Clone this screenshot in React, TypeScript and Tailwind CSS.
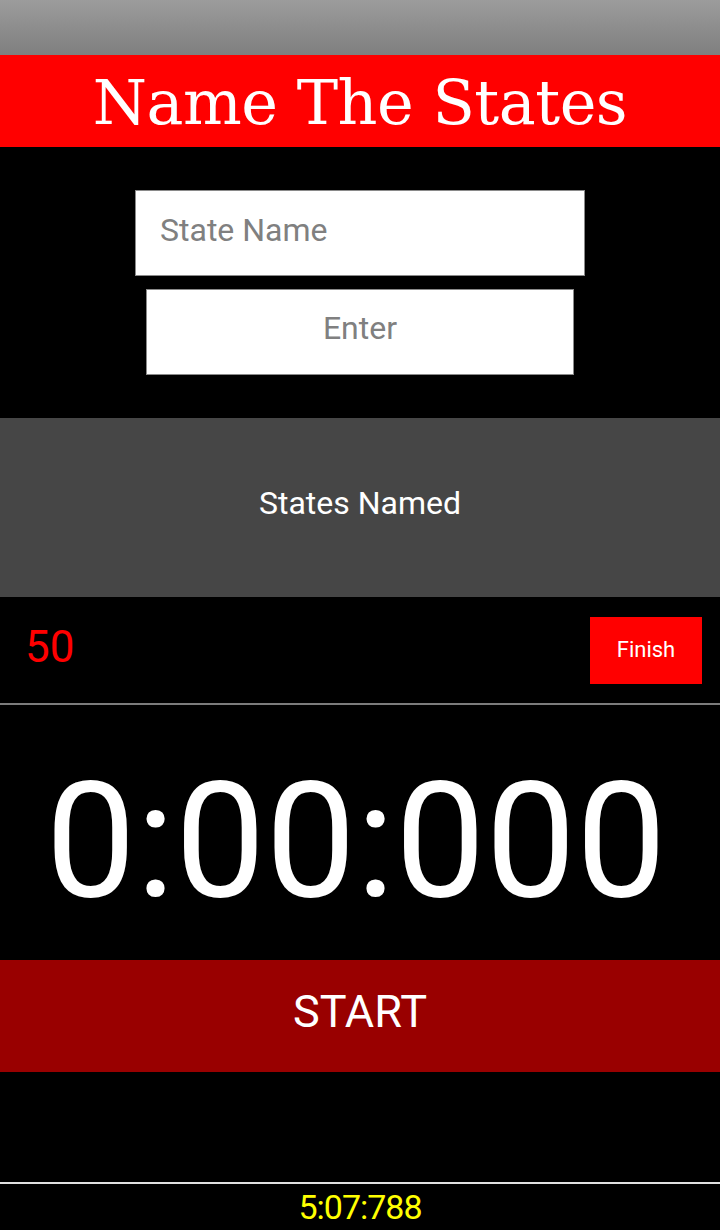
import React from "react";

export default function App() {
  const roboto = { fontFamily: "Roboto, 'Noto Sans', sans-serif" };
  return (
    <div className="w-[720px] h-[1230px] bg-black flex flex-col overflow-hidden" style={roboto}>
      <div className="h-[55px] bg-gradient-to-b from-[#9c9c9c] to-[#7f7f7f]" />
      <div className="h-[92px] bg-[#ff0000] flex items-center justify-center pt-[4px]">
        <span className="text-white text-[62px] leading-none tracking-[-0.5px]" style={{ fontFamily: "'DejaVu Serif', 'Liberation Serif', serif" }}>
          Name The States
        </span>
      </div>
      <div className="h-[271px] flex flex-col items-center pt-[43px] gap-[13px]">
        <div className="w-[450px] h-[86px] bg-white border border-[#8a8a8a] flex items-center pl-[24px] pb-[7px]">
          <span className="text-[32px] leading-none text-[#808080]">State Name</span>
        </div>
        <div className="w-[428px] h-[86px] bg-white border border-[#8a8a8a] flex items-center justify-center pb-[8px]">
          <span className="text-[32px] leading-none text-[#808080]">Enter</span>
        </div>
      </div>
      <div className="h-[179px] bg-[#464646] flex items-center justify-center pb-[9px]">
        <span className="text-white text-[32px] leading-none">States Named</span>
      </div>
      <div className="h-[106px] flex items-center justify-between pl-[25px] pr-[18px]">
        <span className="text-[#ff0000] text-[44px] leading-none pb-[6px]">50</span>
        <div className="w-[112px] h-[67px] bg-[#ff0000] flex items-center justify-center">
          <span className="text-white text-[22px] leading-none">Finish</span>
        </div>
      </div>
      <div className="h-[2px] bg-[#7c7c7c]" />
      <div className="h-[255px] flex justify-center pt-[56px] pr-[8px]">
        <span className="text-white text-[161px] leading-none">0:00:000</span>
      </div>
      <div className="h-[112px] bg-[#990000] flex items-center justify-center pb-[10px]">
        <span className="text-white text-[45px] leading-none">START</span>
      </div>
      <div className="h-[110px]" />
      <div className="h-[2px] bg-[#e0e0e0]" />
      <div className="h-[46px] flex items-center justify-center">
        <span className="text-[#ffff00] text-[34px] leading-none tracking-[-1px]">5:07:788</span>
      </div>
    </div>
  );
}
